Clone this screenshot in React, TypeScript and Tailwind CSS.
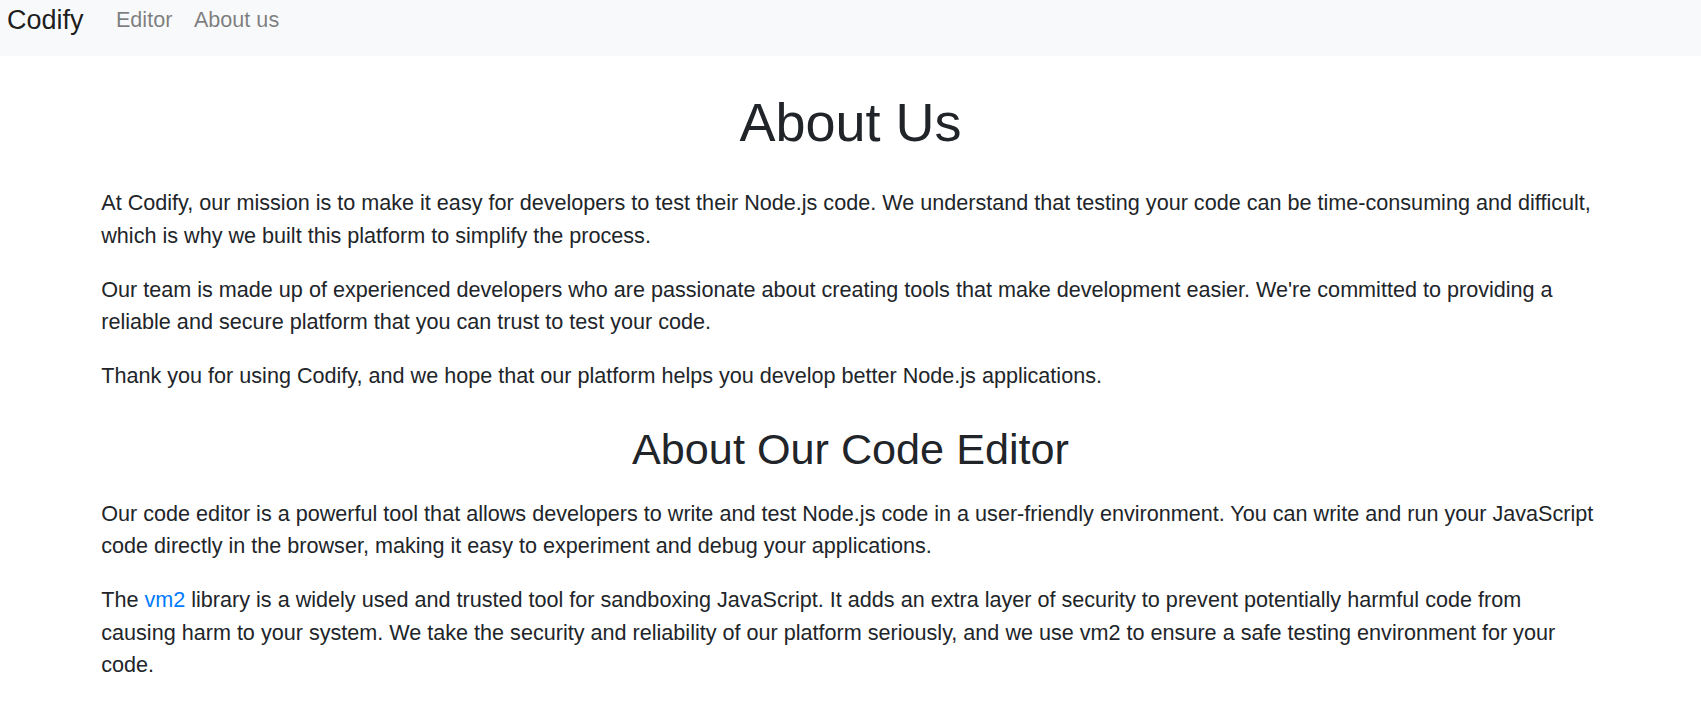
import { FC } from 'react';

const navLinks = [
  { title: 'Editor', href: '#editor' },
  { title: 'About us', href: '#about' },
];

const App: FC = () => (
  <div className="min-h-screen bg-white font-['Liberation_Sans',Arial,sans-serif] text-[21.6px] leading-[1.5] text-[#212529]">
    <nav className="flex h-[56px] items-start bg-[#f8f9fa] pl-[7px]">
      <a href="#" className="mr-[21.6px] text-[27px] leading-[40px] text-black/90">
        Codify
      </a>
      <ul className="flex pt-[3.6px]">
        {navLinks.map((link) => (
          <li key={link.title}>
            <a href={link.href} className="block px-[10.8px] leading-[32.4px] text-black/50">
              {link.title}
            </a>
          </li>
        ))}
      </ul>
    </nav>

    <main className="mx-auto max-w-[1539px] px-[20.25px]">
      <h1 className="mt-[34px] mb-[32.4px] text-center text-[54px] leading-[1.2] font-medium">About Us</h1>
      <p className="mb-[21.6px]">
        At Codify, our mission is to make it easy for developers to test their Node.js code. We understand that
        testing your code can be time-consuming and difficult, which is why we built this platform to simplify the
        process.
      </p>
      <p className="mb-[21.6px]">
        Our team is made up of experienced developers who are passionate about creating tools that make development
        easier. We're committed to providing a reliable and secure platform that you can trust to test your code.
      </p>
      <p className="mb-[21.6px]">
        Thank you for using Codify, and we hope that our platform helps you develop better Node.js applications.
      </p>

      <h2 className="mt-[32px] mb-[21.6px] text-center text-[43.2px] leading-[1.2] font-medium">
        About Our Code Editor
      </h2>
      <p className="mb-[21.6px]">
        Our code editor is a powerful tool that allows developers to write and test Node.js code in a user-friendly
        environment. You can write and run your JavaScript code directly in the browser, making it easy to experiment
        and debug your applications.
      </p>
      <p className="mb-[21.6px]">
        The{' '}
        <a href="https://github.com/patriksimek/vm2" className="text-[#007bff]">
          vm2
        </a>{' '}
        library is a widely used and trusted tool for sandboxing JavaScript. It adds an extra layer of security to
        prevent potentially harmful code from causing harm to your system. We take the security and reliability of
        our platform seriously, and we use vm2 to ensure a safe testing environment for your code.
      </p>
    </main>
  </div>
);

export default App;
